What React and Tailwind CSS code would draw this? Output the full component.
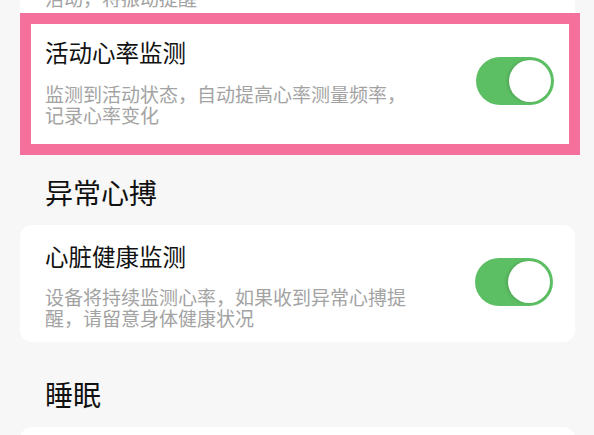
import React from 'react';

const Toggle = ({ className = '' }) => (
  <div className={`flex items-center justify-end w-[78px] h-[48px] p-[3px] rounded-full bg-[#5dbf63] shrink-0 ${className}`}>
    <div className="w-[42px] h-[42px] rounded-full bg-white shadow-[-2px_0_3px_rgba(0,0,0,0.12)]" />
  </div>
);

const App = () => {
  return (
    <div className="w-[594px] h-[435px] overflow-hidden bg-[#f7f7f7] font-['Noto_Sans_CJK_SC','Noto_Sans',sans-serif]">
      {/* previous card, cut off at the top */}
      <div className="ml-[20px] w-[555px] h-[13px] overflow-hidden bg-white">
        <p className="-mt-[13px] pl-[25px] text-[19px] leading-[21px] text-[#a3a3a3]">活动，将振动提醒</p>
      </div>

      {/* highlighted card */}
      <div className="flex justify-between ml-[20px] w-[560px] border-[11px] border-[#f5709a] bg-white pl-[14px] pr-[15px] pt-[13px] pb-[19px]">
        <div>
          <div className="text-[23.5px] leading-[30px] text-[#111]">活动心率监测</div>
          <p className="mt-[16px] max-w-[370px] text-[19px] leading-[21px] text-[#a3a3a3]">
            监测到活动状态，自动提高心率测量频率，记录心率变化
          </p>
        </div>
        <Toggle className="mt-[20px]" />
      </div>

      <div className="mt-[19px] pl-[45px] text-[28px] leading-[36px] text-[#111]">异常心搏</div>

      <div className="flex justify-between mt-[15px] ml-[20px] w-[555px] rounded-[12px] bg-white pl-[25px] pr-[22px] pt-[16px] pb-[14px]">
        <div>
          <div className="text-[23.5px] leading-[30px] text-[#111]">心脏健康监测</div>
          <p className="mt-[15px] max-w-[370px] text-[19px] leading-[21px] text-[#a3a3a3]">
            设备将持续监测心率，如果收到异常心搏提醒，请留意身体健康状况
          </p>
        </div>
        <Toggle className="mt-[17px]" />
      </div>

      <div className="mt-[34px] pl-[45px] text-[28px] leading-[36px] text-[#111]">睡眠</div>

      <div className="mt-[15px] ml-[20px] w-[555px] h-[80px] rounded-[12px] bg-white" />
    </div>
  );
};

export default App;
